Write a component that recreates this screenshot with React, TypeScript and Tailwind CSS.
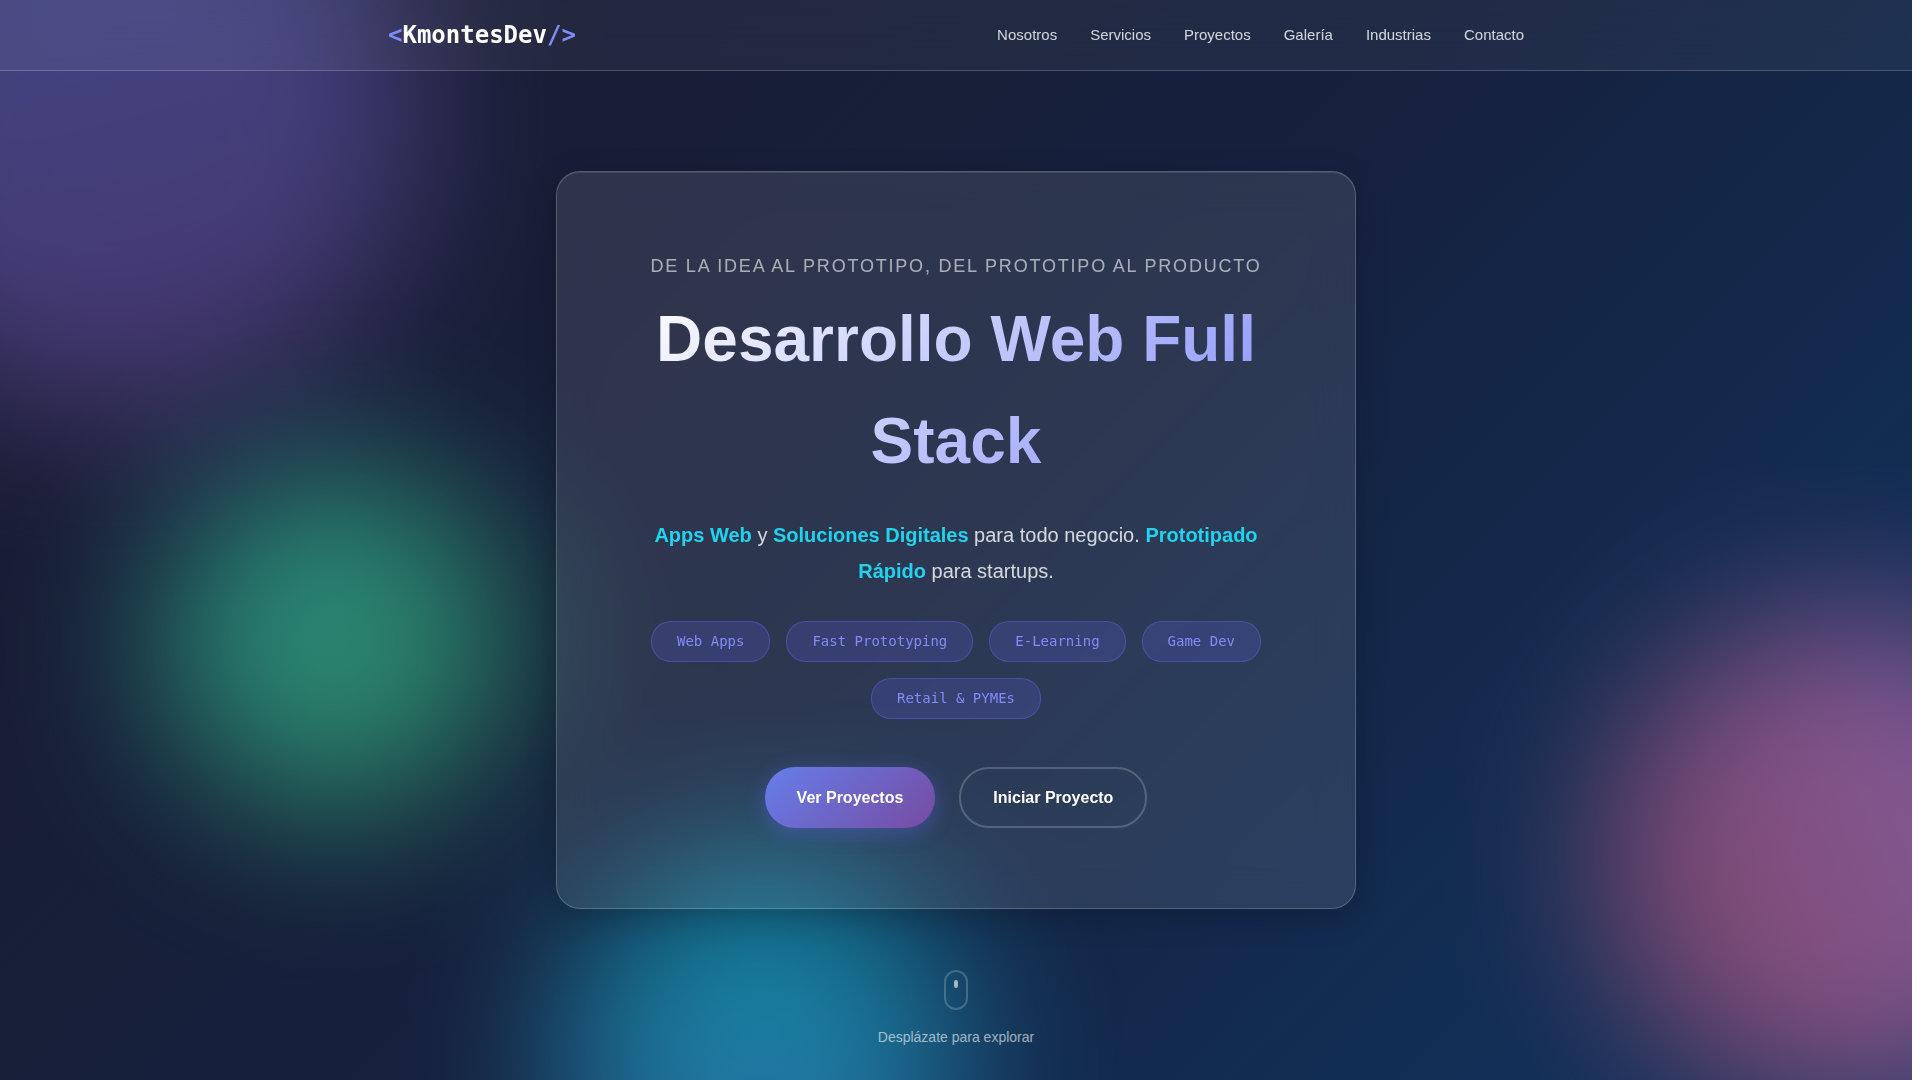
const navLinks = [
  { label: "Nosotros", href: "#nosotros" },
  { label: "Servicios", href: "#servicios" },
  { label: "Proyectos", href: "#proyectos" },
  { label: "Galería", href: "#galeria" },
  { label: "Industrias", href: "#industrias" },
  { label: "Contacto", href: "#contacto" },
];

const tags = ["Web Apps", "Fast Prototyping", "E-Learning", "Game Dev", "Retail & PYMEs"];

/* Blurred colour orbs floating behind the glass panels. */
function Orbs() {
  return (
    <div aria-hidden="true" className="pointer-events-none absolute inset-0 overflow-hidden">
      <div className="absolute -left-[180px] -top-[180px] size-[600px] rounded-full bg-[linear-gradient(165deg,#667eea,#764ba2)] opacity-50 blur-[80px]" />
      <div className="absolute -bottom-[30px] -right-[190px] size-[500px] rounded-full bg-[linear-gradient(240deg,#f093fb,#f5576c)] opacity-50 blur-[80px]" />
      <div className="absolute -bottom-[180px] left-[560px] size-[400px] rounded-full bg-[linear-gradient(0deg,#4facfe,#00f2fe)] opacity-50 blur-[80px]" />
      <div className="absolute left-[160px] top-[465px] size-[350px] rounded-full bg-[linear-gradient(315deg,#43e97b,#38f9d7)] opacity-50 blur-[80px]" />
    </div>
  );
}

function Header() {
  return (
    <header className="relative z-10 border-b border-white/20 bg-white/5 backdrop-blur-[20px]">
      <div className="mx-auto flex h-[70px] max-w-[1200px] items-center justify-between px-8">
        <a href="#inicio" className="font-['DejaVu_Sans_Mono',monospace] text-2xl leading-[39px] font-bold text-white">
          <span className="text-[#818cf8]">&lt;</span>KmontesDev<span className="text-[#818cf8]">/&gt;</span>
        </a>
        <nav aria-label="Principal">
          <ul className="flex gap-[33px]">
            {navLinks.map((link) => (
              <li key={link.href}>
                <a href={link.href} className="text-[15px] text-white/80">
                  {link.label}
                </a>
              </li>
            ))}
          </ul>
        </nav>
      </div>
    </header>
  );
}

function HeroCard() {
  return (
    <section className="mt-[100px] w-full max-w-[800px] rounded-3xl border border-white/20 bg-white/10 p-20 text-center shadow-[0_8px_32px_rgba(0,0,0,0.2),inset_0_1px_0_rgba(255,255,255,0.1)] backdrop-blur-[20px]">
      <p className="mb-2 text-lg leading-[28px] tracking-widest text-white/60 uppercase">
        De la idea al prototipo, del prototipo al producto
      </p>
      <h1 className="mb-[25px] bg-[linear-gradient(135deg,#ffffff_0%,#818cf8_100%)] bg-clip-text text-[64px] leading-[102px] font-bold text-transparent">
        Desarrollo Web Full Stack
      </h1>
      <p className="mb-8 text-xl leading-9 text-white/80">
        <strong className="font-semibold text-[#22d3ee]">Apps Web</strong> y{" "}
        <strong className="font-semibold text-[#22d3ee]">Soluciones Digitales</strong> para todo negocio.{" "}
        <strong className="font-semibold text-[#22d3ee]">Prototipado Rápido</strong> para startups.
      </p>
      <ul className="mb-12 flex flex-wrap justify-center gap-4">
        {tags.map((tag) => (
          <li
            key={tag}
            className="rounded-[20px] border border-[#6366f1]/40 bg-[#6366f1]/20 px-[25px] py-2 font-['DejaVu_Sans_Mono',monospace] text-sm leading-[23px] text-[#818cf8]"
          >
            {tag}
          </li>
        ))}
      </ul>
      <div className="flex flex-wrap justify-center gap-6">
        <a
          href="#proyectos"
          className="flex items-center rounded-[30px] bg-[linear-gradient(135deg,#667eea_0%,#764ba2_100%)] px-8 font-semibold text-white shadow-[0_4px_20px_rgba(99,102,241,0.4)]"
        >
          Ver Proyectos
        </a>
        <a
          href="#contacto"
          className="rounded-[30px] border-2 border-white/20 px-8 py-4 leading-[25px] font-semibold text-white"
        >
          Iniciar Proyecto
        </a>
      </div>
    </section>
  );
}

function ScrollHint() {
  return (
    <a href="#nosotros" className="mt-auto flex flex-col items-center gap-4 pb-8 text-sm leading-[22px] text-white/60">
      <span aria-hidden="true" className="flex h-10 w-6 justify-center rounded-xl border-2 border-white/20 pt-2">
        <span className="h-2 w-1 rounded-sm bg-white/60" />
      </span>
      Desplázate para explorar
    </a>
  );
}

export default function App() {
  return (
    <div className="bg-white pr-2 font-['Liberation_Sans',sans-serif]">
      <div className="relative flex min-h-screen flex-col overflow-hidden bg-[linear-gradient(135deg,#1a1a2e_0%,#16213e_50%,#0f3460_100%)]">
        <Orbs />
        <Header />
        <main className="relative flex flex-1 flex-col items-center">
          <HeroCard />
          <ScrollHint />
        </main>
      </div>
    </div>
  );
}
